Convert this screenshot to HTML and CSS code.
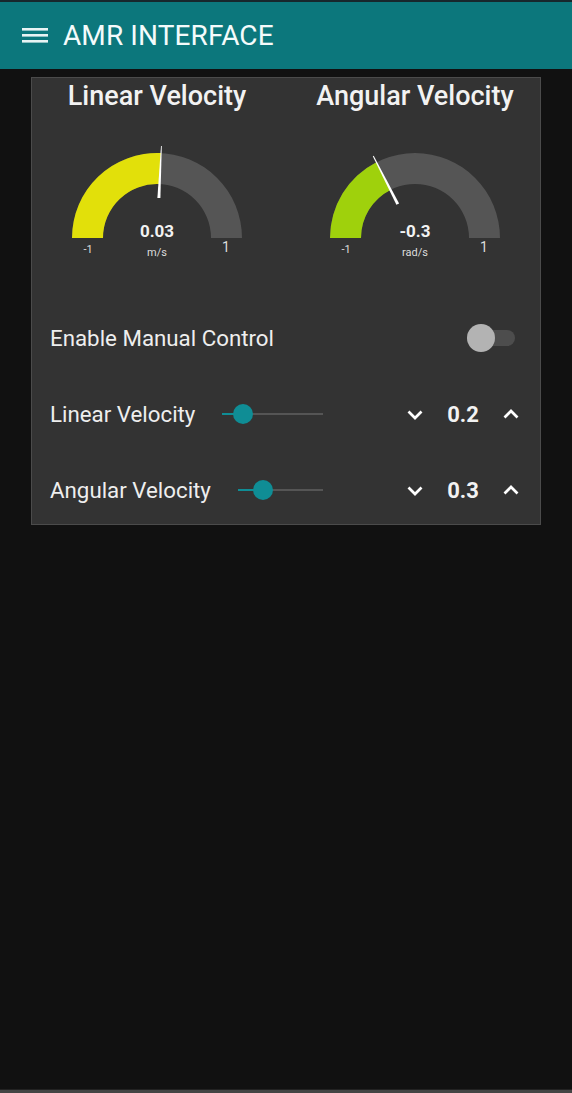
FILE: index.html
```html
<!DOCTYPE html>
<html>
<head>
<meta charset="utf-8">
<link rel="stylesheet" href="styles.css">
</head>
<body>
<header class="topbar">
  <svg class="menu-icon" width="28" height="20" viewBox="0 0 28 20">
    <rect x="1" y="2" width="26" height="2.6" fill="#e8f4f4"/>
    <rect x="1" y="8" width="26" height="2.6" fill="#e8f4f4"/>
    <rect x="1" y="14" width="26" height="2.6" fill="#e8f4f4"/>
  </svg>
  <span class="title">AMR INTERFACE</span>
</header>
<main class="content">
  <section class="card">
    <div class="gauges">
      <div class="gauge">
        <div class="gauge-title">Linear Velocity</div>
        <svg class="gauge-svg" width="240" height="150" viewBox="0 0 240 150">
          <path d="M35,123 A85,85 0 0 1 205,123 L174,123 A54,54 0 0 0 66,123 Z" fill="#555555"/>
          <path d="M35,123 A85,85 0 0 1 124.0,38.1 L122.54,69.06 A54,54 0 0 0 66,123 Z" fill="#e2e00a"/>
          <polygon points="120.4,83.0 123.4,83.1 124.8,31.1 124.0,31.1" fill="#ffffff"/>
          <text x="120" y="122" class="g-value">0.03</text>
          <text x="120" y="141" class="g-unit">m/s</text>
          <text x="51" y="138" class="g-min">-1</text>
          <text x="189" y="137" class="g-max">1</text>
        </svg>
      </div>
      <div class="gauge">
        <div class="gauge-title">Angular Velocity</div>
        <svg class="gauge-svg" width="240" height="150" viewBox="0 0 240 150">
          <path d="M35,123 A85,85 0 0 1 205,123 L174,123 A54,54 0 0 0 66,123 Z" fill="#555555"/>
          <path d="M35,123 A85,85 0 0 1 81.41,47.26 L95.48,74.89 A54,54 0 0 0 66,123 Z" fill="#9fd10c"/>
          <polygon points="101.4,89.8 104.1,88.4 78.7,40.8 77.8,41.2" fill="#ffffff"/>
          <text x="120" y="122" class="g-value">-0.3</text>
          <text x="120" y="141" class="g-unit">rad/s</text>
          <text x="51" y="138" class="g-min">-1</text>
          <text x="189" y="137" class="g-max">1</text>
        </svg>
      </div>
    </div>
    <div class="rows">
      <div class="row">
        <span class="label">Enable Manual Control</span>
        <span class="spacer"></span>
        <span class="switch"><span class="switch-thumb"></span></span>
      </div>
      <div class="row">
        <span class="label">Linear Velocity</span>
        <div class="slider">
          <div class="slider-track">
            <div class="slider-fill" style="width:20%"></div>
            <div class="slider-thumb" style="left:20%"></div>
          </div>
        </div>
        <div class="spinner">
          <button class="chev"><svg width="18" height="11" viewBox="0 0 18 11"><polyline points="2.5,2.5 9,9 15.5,2.5" fill="none" stroke="#fff" stroke-width="2.7"/></svg></button>
          <span class="num">0.2</span>
          <button class="chev"><svg width="18" height="11" viewBox="0 0 18 11"><polyline points="2.5,8.5 9,2 15.5,8.5" fill="none" stroke="#fff" stroke-width="2.7"/></svg></button>
        </div>
      </div>
      <div class="row">
        <span class="label">Angular Velocity</span>
        <div class="slider">
          <div class="slider-track">
            <div class="slider-fill" style="width:30%"></div>
            <div class="slider-thumb" style="left:30%"></div>
          </div>
        </div>
        <div class="spinner">
          <button class="chev"><svg width="18" height="11" viewBox="0 0 18 11"><polyline points="2.5,2.5 9,9 15.5,2.5" fill="none" stroke="#fff" stroke-width="2.7"/></svg></button>
          <span class="num">0.3</span>
          <button class="chev"><svg width="18" height="11" viewBox="0 0 18 11"><polyline points="2.5,8.5 9,2 15.5,8.5" fill="none" stroke="#fff" stroke-width="2.7"/></svg></button>
        </div>
      </div>
    </div>
  </section>
</main>
<footer class="bottom-line"></footer>
</body>
</html>
```

FILE: styles.css
```css
* { box-sizing: border-box; }
html, body { margin: 0; padding: 0; }
body {
  background: #111111;
  font-family: Roboto, "Liberation Sans", sans-serif;
  color: #eeeeee;
  height: 1093px;
  display: flex;
  flex-direction: column;
  overflow: hidden;
}
.topbar {
  border-top: 2px solid #17272c;
  height: 69px;
  background: #0c777c;
  display: flex;
  align-items: center;
  padding-left: 21px;
  flex-shrink: 0;
}
.menu-icon { display: block; margin-right: 14px; }
.title {
  font-size: 28px;
  color: #f4fbfb;
  letter-spacing: 0.1px;
}
.content {
  flex: 1;
  padding: 8px 31px 0 31px;
}
.card {
  width: 510px;
  height: 448px;
  background: #333333;
  border: 1px solid #4b4b4b;
  display: flex;
  flex-direction: column;
}
.gauges {
  display: flex;
  gap: 18px;
  padding: 0 5px;
}
.gauge {
  width: 240px;
  display: flex;
  flex-direction: column;
  align-items: center;
}
.gauge-title {
  font-size: 27px;
  font-weight: 500;
  color: #f2f2f2;
  height: 37px;
  line-height: 37px;
  white-space: nowrap;
}
.gauge-svg { display: block; }
.g-value {
  font-family: Roboto, "Liberation Sans", sans-serif;
  font-weight: 700;
  font-size: 17px;
  fill: #f2f2f2;
  text-anchor: middle;
}
.g-unit, .g-min, .g-max {
  font-family: Roboto, "Liberation Sans", sans-serif;
  font-size: 11px;
  fill: #dddddd;
  text-anchor: middle;
}
.g-max { font-size: 14px; }
.g-min { font-size: 11px; }
.rows {
  display: flex;
  flex-direction: column;
  gap: 28px;
  padding: 49px 0 0 18px;
}
.row {
  height: 48px;
  display: flex;
  align-items: center;
}
.label {
  font-size: 22.3px;
  color: #eeeeee;
  white-space: nowrap;
}
.spacer { flex: 1; }
.switch {
  position: relative;
  width: 48px;
  height: 16px;
  border-radius: 8px;
  background: #4d4d4d;
  margin-right: 25px;
}
.switch-thumb {
  position: absolute;
  left: 0;
  top: -6px;
  width: 28px;
  height: 28px;
  border-radius: 50%;
  background: #b3b3b3;
}
.slider {
  flex: 1;
  margin-left: 27px;
  display: flex;
  align-items: center;
  height: 20px;
}
.slider-track {
  position: relative;
  width: 100%;
  height: 2px;
  background: #555555;
}
.slider-fill {
  position: absolute;
  left: 0;
  top: 0;
  height: 2px;
  background: #0f8d95;
}
.slider-thumb {
  position: absolute;
  top: -9px;
  width: 20px;
  height: 20px;
  margin-left: -10px;
  border-radius: 50%;
  background: #0f8d95;
}
.spinner {
  width: 217px;
  display: flex;
  justify-content: flex-end;
  align-items: center;
  gap: 6px;
  padding-right: 11px;
}
.chev {
  width: 36px;
  height: 36px;
  border: none;
  background: transparent;
  padding: 0;
  display: flex;
  align-items: center;
  justify-content: center;
}
.chev svg { display: block; }
.num {
  width: 48px;
  text-align: center;
  font-size: 22px;
  font-weight: 700;
  color: #f2f2f2;
}
.bottom-line {
  height: 4px;
  background: #444444;
  flex-shrink: 0;
  border-top: 1px solid #222;
}
```
